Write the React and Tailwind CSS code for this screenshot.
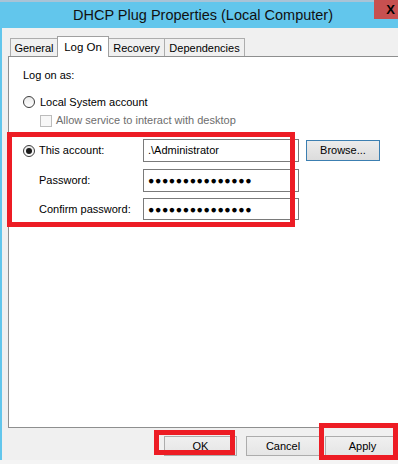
import React from 'react';

const TABS = [
  { label: 'General', w: 'w-[48px]' },
  { label: 'Log On', w: 'w-[52px]', active: true },
  { label: 'Recovery', w: 'w-[57px]' },
  { label: 'Dependencies', w: 'w-[81px]' },
];

const DOTS = '●●●●●●●●●●●●●●●';

function Radio({ checked }) {
  return (
    <span className="w-[12px] h-[12px] rounded-full border border-[#3c3c3c] bg-gradient-to-b from-[#eaeaea] to-white flex items-center justify-center shrink-0">
      {checked && <span className="w-[6px] h-[6px] rounded-full bg-[#1a1a1a]" />}
    </span>
  );
}

function Field({ children, h = 'h-[23px]' }) {
  return (
    <div className={`w-[156px] ${h} border border-[#7a7a7a] bg-white flex items-center pl-[4px] shrink-0`}>
      {children}
    </div>
  );
}

function Button({ children, className = '' }) {
  return (
    <div className={`h-[20px] shrink-0 border border-[#acacac] bg-gradient-to-b from-[#f0f0f0] to-[#e5e5e5] flex items-center justify-center ${className}`}>
      {children}
    </div>
  );
}

export default function App() {
  return (
    <div className="w-[398px] h-[464px] relative flex flex-col bg-[#62c6ec] overflow-hidden font-['Liberation_Sans',Arial,sans-serif] text-[11px] text-black leading-none">
      {/* Title bar */}
      <div className="h-[2px] bg-[#a9c3d6]" />
      <div className="h-[26px] flex items-center justify-center pl-[8px]">
        <span className="text-[14.5px] text-[#111]">DHCP Plug Properties (Local Computer)</span>
      </div>
      <div className="absolute top-0 right-0 w-[24px] h-[19px] bg-[#c75050] flex items-center justify-end pr-[3px]">
        <span className="text-[13px] font-bold text-black">X</span>
      </div>

      {/* Body */}
      <div className="flex-1 ml-[2px] bg-[#f0f0f0] flex flex-col overflow-hidden">
        {/* Tabs */}
        <div className="ml-[8px] mt-[8px] h-[20px] flex items-end">
          {TABS.map((t) =>
            t.active ? (
              <div
                key={t.label}
                className={`${t.w} h-[21px] -mb-px -ml-px relative z-10 bg-white border border-b-0 border-[#a0a0a0] flex items-start justify-center pt-[5px] text-[11.5px]`}
              >
                {t.label}
              </div>
            ) : (
              <div
                key={t.label}
                className={`${t.w} h-[18px] -ml-px first:ml-0 bg-[#f0f0f0] border border-b-0 border-[#adadad] flex items-center justify-center pt-[1px]`}
              >
                {t.label}
              </div>
            )
          )}
        </div>

        {/* Tab panel */}
        <div className="ml-[6px] w-[400px] h-[372px] shrink-0 border border-[#8e8f8f] bg-white pl-[14px] pt-[11px] flex flex-col">
          <div className="h-[14px] flex items-center">Log on as:</div>

          <div className="mt-[13px] h-[14px] flex items-center gap-[5px]">
            <Radio />
            <span>Local System account</span>
          </div>

          <div className="mt-[5px] h-[13px] flex items-center gap-[4px] ml-[17px]">
            <span className="w-[12px] h-[12px] border border-[#bcbcbc] bg-[#f7f7f7] shrink-0" />
            <span className="text-[#6d6d6d]">Allow service to interact with desktop</span>
          </div>

          <div className="mt-[12px] flex items-center">
            <div className="w-[120px] shrink-0 flex items-center gap-[4px]">
              <Radio checked />
              <span>This account:</span>
            </div>
            <Field>
              <span>.\Administrator</span>
            </Field>
            <div className="ml-[7px] w-[74px] h-[21px] shrink-0 border border-[#3c7fb1] bg-gradient-to-b from-[#ececec] to-[#dcdcdc] flex items-center justify-center">
              Browse...
            </div>
          </div>

          <div className="mt-[7px] flex items-center">
            <div className="w-[120px] shrink-0 pl-[16px]">Password:</div>
            <Field>
              <span className="text-[10.5px] tracking-[0.6px]">{DOTS}</span>
            </Field>
          </div>

          <div className="mt-[6px] flex items-center">
            <div className="w-[120px] shrink-0 pl-[16px]">Confirm password:</div>
            <Field h="h-[22px]">
              <span className="text-[10.5px] tracking-[0.6px]">{DOTS}</span>
            </Field>
          </div>
        </div>

        {/* Buttons */}
        <div className="mt-[8px] flex items-center">
          <Button className="ml-[162px] w-[73px]">OK</Button>
          <Button className="ml-[9px] w-[74px]">Cancel</Button>
          <Button className="ml-[5px] w-[75px]">Apply</Button>
        </div>
      </div>
      <div className="h-[4px] bg-[#f4f4f4]" />

      {/* Red annotation boxes */}
      <div className="absolute left-[7px] top-[132px] w-[288px] h-[95px] border-[5px] border-[#ed1c24] pointer-events-none" />
      <div className="absolute left-[154px] top-[430px] w-[81px] h-[25px] border-[5px] border-[#ed1c24] pointer-events-none" />
      <div className="absolute left-[319px] top-[423px] w-[79px] h-[37px] border-[5px] border-[#ed1c24] pointer-events-none" />
    </div>
  );
}
